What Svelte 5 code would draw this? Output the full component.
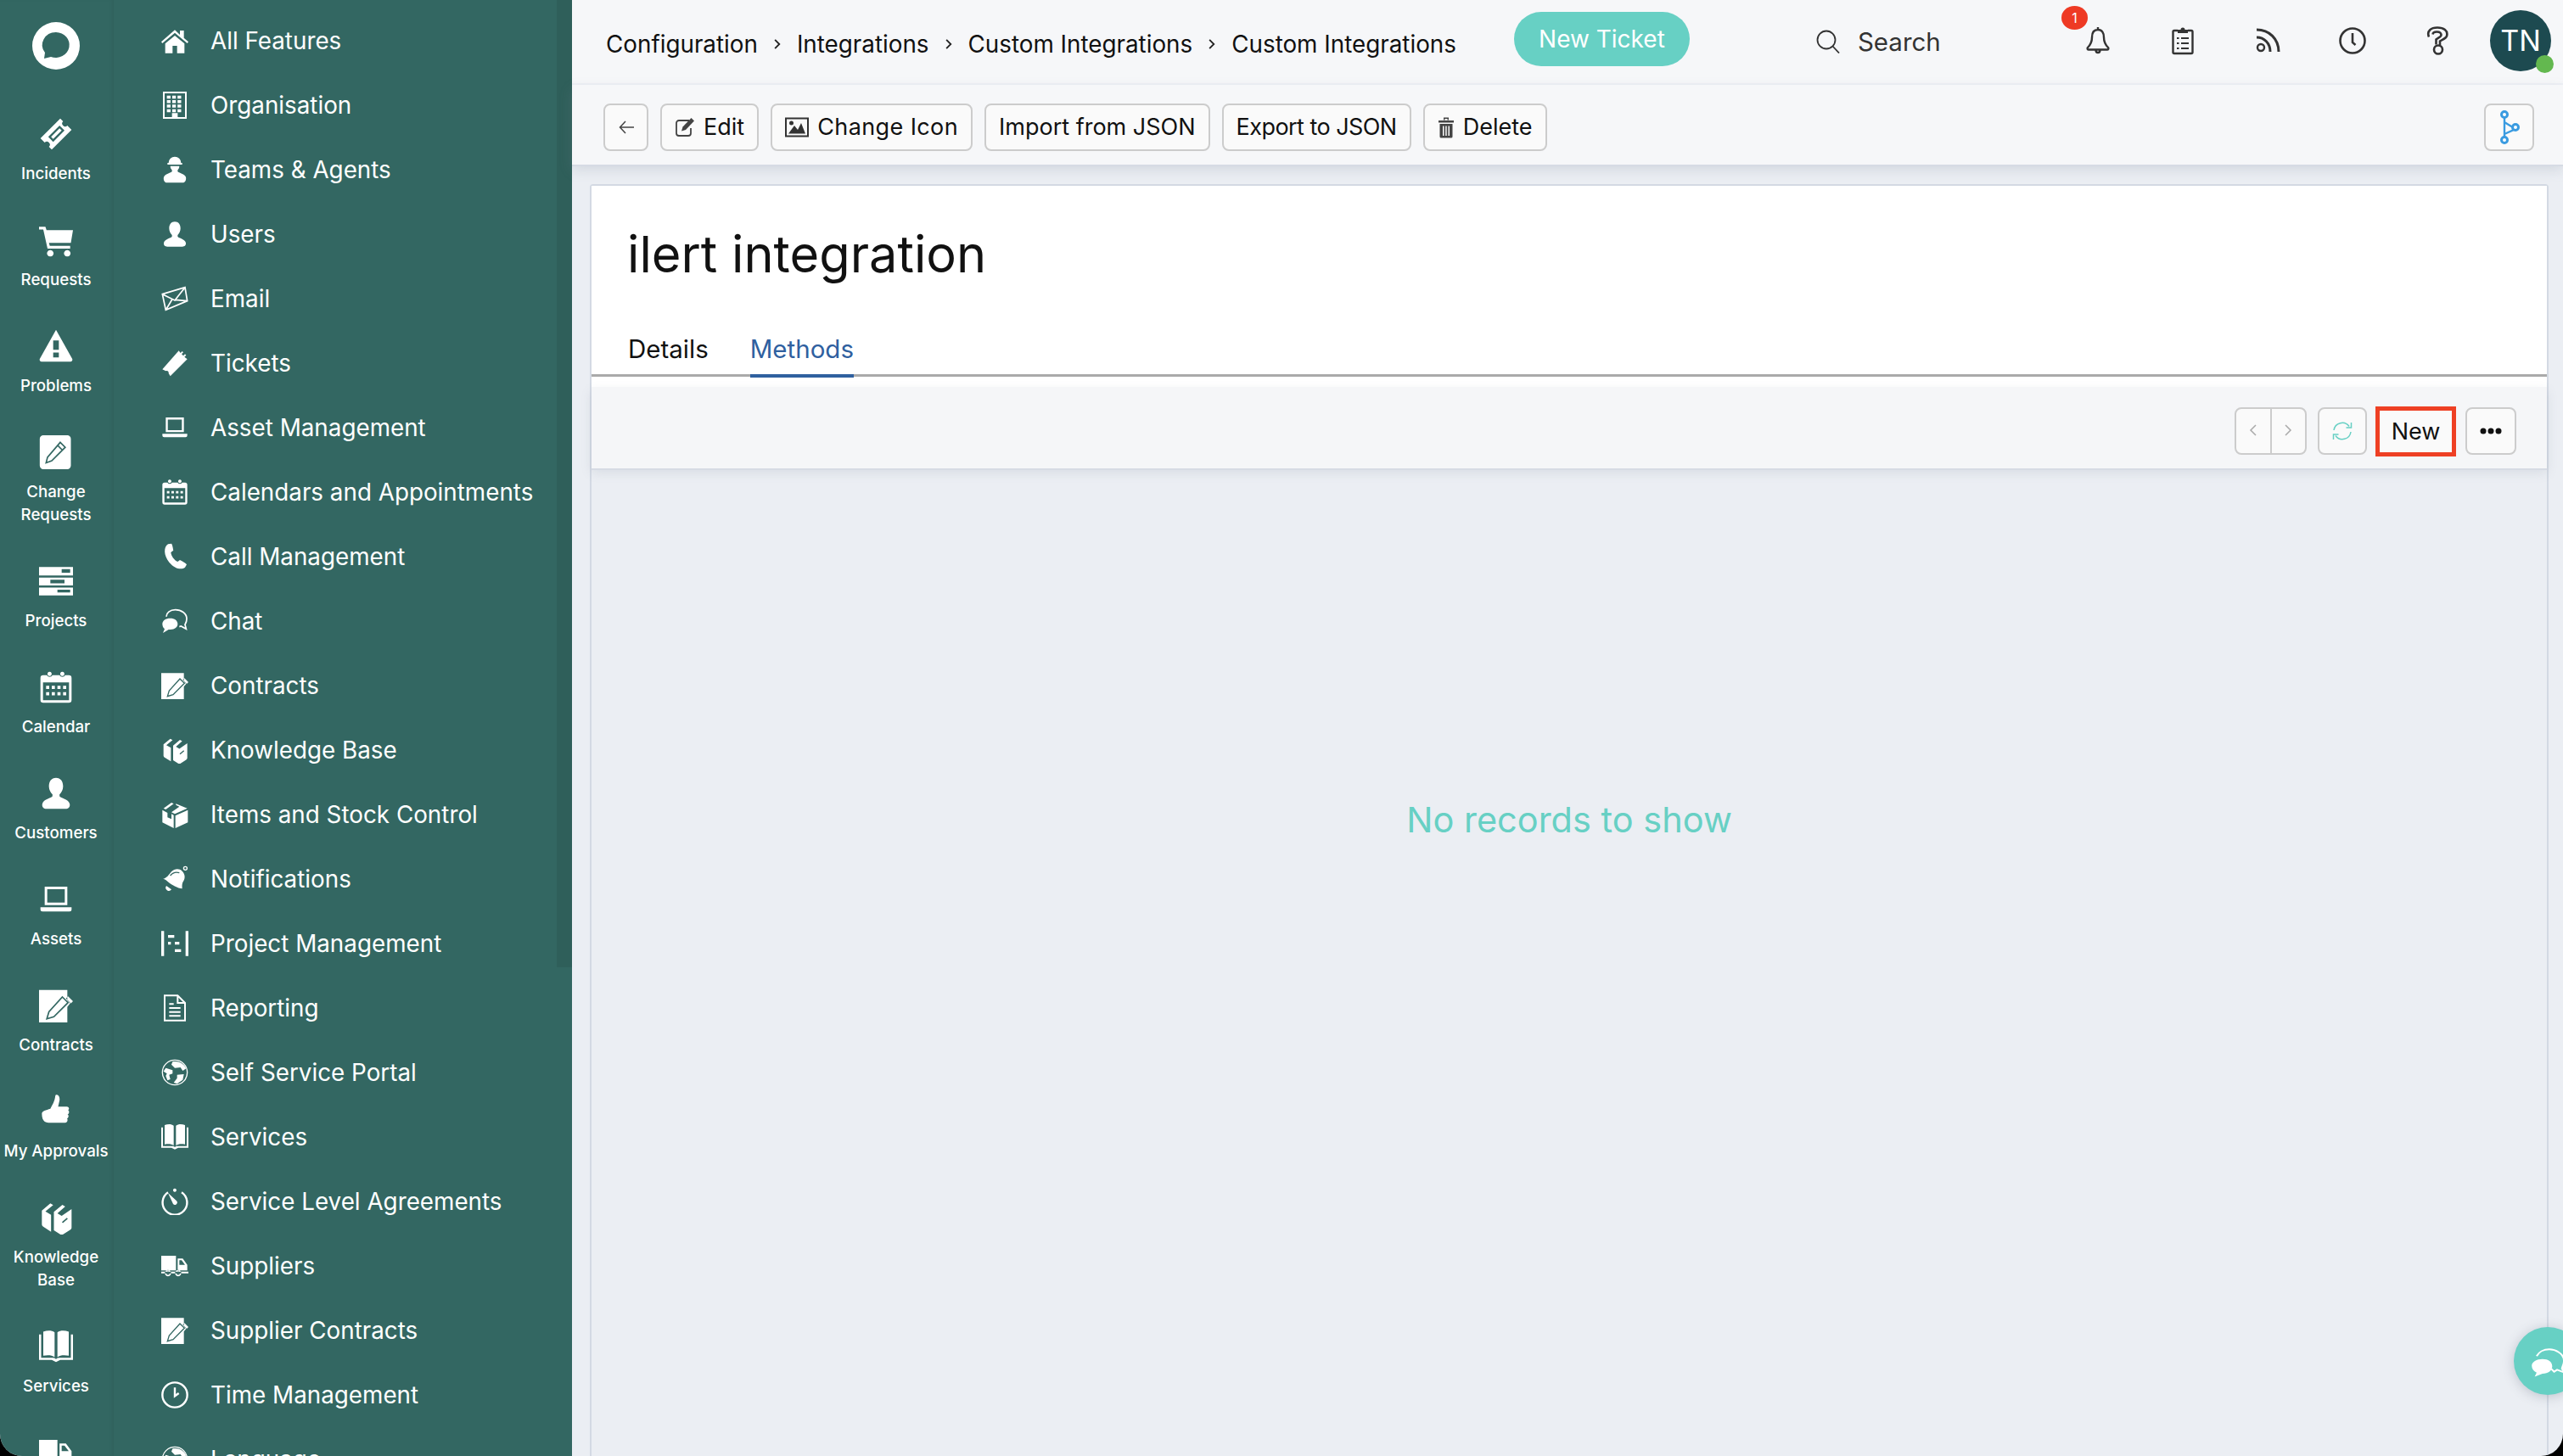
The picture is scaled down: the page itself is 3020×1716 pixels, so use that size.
<script>
	const cells = (xs, ys, w, h) =>
		ys.flatMap((y) => xs.map((x) => `M${x} ${y}h${w}v${h}h-${w}z`)).join('');

	const pencilPage = {
		f: 'M0 1h20v7.500l2 2L20 13v11H0zM20.500 5.500 24 9l-1.500 1.500L19 7z',
		k: 'M16.500 6 20.500 10 10.500 20 5.500 21.500 7 16.500z'
	};
	const globe = {
		s: 'M23 12a11 11 0 1 1-22 0 11 11 0 1 1 22 0',
		f: 'M10 2.500c5-1 10 1.500 12 6l-3 2-2-3-5 .5-3-3zM4 8l6 2v3l-3 1 1 4-2.500 1L4 15l1-2-3-2zM14 14l6-.5-1 5-5 3.500-3-1 3-4z',
		w: 1
	};
	const user = {
		f: 'M12 1c3.300 0 5 2.500 5 6 0 2.500-1.200 4.500-2.500 5.700V14c0 1.300 6.500 2 7.200 5.500.4 2.300-1 3.500-3 3.500H5.300c-2 0-3.400-1.200-3-3.500C3 16 9.500 15.300 9.500 14v-1.300C8.200 11.500 7 9.500 7 7c0-3.500 1.700-6 5-6z'
	};
	const laptop = {
		f: 'M4 3h16v13H4zM5.800 4.800v9.400h12.400V4.800zM1 17.500h22V19a1.500 1.500 0 0 1-1.500 1.500h-19A1.500 1.500 0 0 1 1 19z'
	};
	const calendar = {
		f:
			'M3 3.500h2.500a2.300 2.300 0 0 0 4 0h5a2.300 2.300 0 0 0 4 0H21a2 2 0 0 1 2 2V21a2 2 0 0 1-2 2H3a2 2 0 0 1-2-2V5.500a2 2 0 0 1 2-2zM2.800 8.500v12.700h18.400V8.500zM7.500 1a1.500 1.500 0 1 1-.1 0zM16.500 1a1.500 1.500 0 1 1-.1 0z' +
			cells([5, 9, 13, 17], [11, 15.500], 2.200, 2.200)
	};
	const books = {
		f: 'M2 7 8 2l2 1.200L4.500 7.700l4 2.300V22L3 18.500a2 2 0 0 1-1-1.500zM10.500 8 16.500 3l2 1.200L13 9l3 1.800L23 6v13c0 .8-.5 1.300-1 1.700L16 24.500 10.500 21z',
		k: 'M16.500 15.500 20 12.500'
	};
	const book = {
		f: 'M3 1.500c3-1 6-1 8 .5v17.500c-2-1.500-5-1.500-8-1zM21 1.500c-3-1-6-1-8 .5v17.500c2-1.500 5-1.500 8-1zM0 3.500h1.500v16.500H10c1 0 1.500.5 2 1 .5-.5 1-1 2-1h8.500V3.500H24v18h-9l-3 1.500-3-1.500H0z'
	};
	const truck = {
		f: 'M0 3h13v13H0zM14.500 5.500H19l4 5.500v5h-8.500zM16 7v4h5l-3-4zM0 17h4.500a2.500 2.500 0 0 0 3 0h6a2.500 2.500 0 0 0 3 0H24v1.500h-3.500H0zM6 15.500a2.800 2.800 0 1 1-.1 0zM15 15.500a2.800 2.800 0 1 1-.1 0z',
		k: 'M7 18.300a1 1 0 1 1-2 0 1 1 0 1 1 2 0M16 18.300a1 1 0 1 1-2 0 1 1 0 1 1 2 0'
	};

	const icons = {
		home: { f: 'M12 2.500 0 13l1 1.300L12 5l11 9.300 1-1.300-4-3.400V3h-3.500v3.700zM3.500 14.500V23H10v-6.500h4V23h6.500v-8.500L12 7.500z' },
		building: {
			f: 'M1.500 0h21v24h-21zM3 1.500v21h6.500V19h5v3.500H21v-21z' + cells([5, 9.700, 14.400], [3.500, 7.500, 11.500, 15.500], 3.200, 2.600)
		},
		engineer: {
			f: 'M6.500 6a5.500 5.500 0 0 1 11 0h1v1.500h-13V6zM8 8.800h8a4 4 0 0 1-1.500 3.500v1.200c0 1 5.500 2 7 4.500 1 2 0 5-2 5.500H4.500c-2-.5-3-3.500-2-5.500 1.500-2.500 7-3.500 7-4.500v-1.200A4 4 0 0 1 8 8.800z'
		},
		user,
		email: {
			s: 'M1 8 21 2l2 12L4 22zM1 8l11 5.500L21 2M4 22l6-10M23 14l-10.500-1',
			w: 1.300
		},
		ticket: {
			f: 'M1 17.500 15.500 1 17 3 18.500 1.500l1 1L18 4l1.500 1.500L21 4l1 1-1.500 1.500L23 8.500 8 23.500 6.500 21c.5-1-1-3-2.500-2z'
		},
		laptop,
		calendar,
		phone: {
			f: 'M6 1 9 .5c.5 0 1.500 4 1.700 6L8.500 8.200c.2 3 3 7 6 8.300l2-1.500c1.500.8 5.500 3 6 4L21 21.500C18 24 12 23 7 17S2 3.500 6 1z'
		},
		chat: {
			f: 'M8 9.500c3.800 0 6.500 2 6.500 5S12 19.500 8 19.500H6.500l-5 3 1.500-3.500C1.500 18 1 16 1 14.500 1 11.500 4 9.500 8 9.500z',
			s: 'M4.500 8c0-3 3-6 8-6S22.500 5 22.500 10c0 3-1 4-1.500 5l1 4-4.500-2.500-1.500.5',
			w: 1.300
		},
		contract: pencilPage,
		books,
		box: {
			f: 'M1 8 5.500 10.500V14.500L9 16V11.500L11 12.500V24L1 19zM12.500 13 23.500 8v11l-11 5zM2 6.500 9 1.500l2 1-7 5zM13 2.500l10 4-11 5-3-1.500 7-5-3-1.500z'
		},
		bell: {
			f: 'M9 5.500c3-3 7-3 9.500-.5s3 6 1 9c-1.500 2-1 5-1 6.500-4-.5-9-3-13-6.500-2-1.700-3-2-4-2 2-.5 4-2 5-3.500C8 7 8 6.500 9 5.500zM4.500 18l4.500 3.200a2.700 2.700 0 0 1-4.500-3.200z',
			s: 'M22.800 2.500a1.500 1.500 0 1 1-3 0 1.500 1.500 0 1 1 3 0',
			k: 'M8 9c2-2.500 5-3.500 8-2.500',
			w: 1
		},
		gantt: { f: 'M0 1h2.500v22H0zM21.500 1H24v22h-2.500zM6 4.500h5.500V7H6zM6 10.500h2.500V13H6zM12 10.500h4V13h-4zM12 17h5.500v2.500H12z' },
		report: {
			s: 'M3 1h11.500L21 7.500V23H3zM14.500 1v6.500H21M7 8.500h4M7 12h10M7 15.500h10M7 19h10',
			w: 1.500
		},
		globe,
		book,
		timer: {
			s: 'M6 4a10.800 10.800 0 1 0 12 0',
			f: 'M6 4.500 13.500 11.500a2 2 0 0 1-3 2.800zM12 .5a1.500 1.500 0 1 1-.1 0z',
			w: 1.800
		},
		truck,
		clock: { s: 'M23 12a11 11 0 1 1-22 0 11 11 0 1 1 22 0M12 5.500v7.500l3.500-2.500', w: 1.800 },
		incident: {
			f: 'M15 1 17 3a2 2 0 0 0 3 3l3 3L9 23l-2-2a2 2 0 0 0-3-3l-3-3zM14.500 6 6.500 14 10 17.500 18 9.500zM14.500 8 8.500 14 10 15.500 16 9.500z'
		},
		cart: { f: 'M0 2.500h4.500l.8 2.500H24l-1.500 9H7l.6 2H22v2H6L3 4.500H0zM8 19a2.300 2.300 0 1 1-.1 0zM20 19a2.300 2.300 0 1 1-.1 0z' },
		warning: { f: 'M12 .5 23.500 21a1.500 1.500 0 0 1-1.300 2H1.800A1.500 1.500 0 0 1 .5 21zM10 8v6.500h4V8zM10 16.500V20h4v-3.500z' },
		change: {
			f: 'M3 0h17a2.500 2.500 0 0 1 2.500 2.500v19A2.500 2.500 0 0 1 20 24H3a2.500 2.500 0 0 1-2.500-2.500v-19A2.500 2.500 0 0 1 3 0z',
			k: 'M15 5 18.500 8.500 9 18 5 19.500 6 15.500zM13 7 16.500 10.500'
		},
		projects: { f: 'M0 2h24v6H0zM16 3.500V6h6V3.500zM0 9.500h24V15H0zM8 11v2.500h10V11zM0 16.500h24V22H0zM13 18v2h9v-2z' },
		thumb: {
			f: 'M8 10c1.500-3 3-5 3.500-9 .2-1.500 3.500-1 3 3l-1 4.500h6c2 0 2 2 1 2.500 1 .5 1 2.500-.3 3 1 .8.8 2.500-.4 3 .8 1 .2 3-1.500 3H8c-3 0-6-.5-6-6.500C2 11.500 5 11 8 10z'
		}
	};

	const rail = [
		['Incidents', 'incident'],
		['Requests', 'cart'],
		['Problems', 'warning'],
		['Change Requests', 'change'],
		['Projects', 'projects'],
		['Calendar', 'calendar'],
		['Customers', 'user'],
		['Assets', 'laptop'],
		['Contracts', 'contract'],
		['My Approvals', 'thumb'],
		['Knowledge Base', 'books'],
		['Services', 'book'],
		['Suppliers', 'truck']
	];

	const menu = [
		['All Features', 'home'],
		['Organisation', 'building'],
		['Teams & Agents', 'engineer'],
		['Users', 'user'],
		['Email', 'email'],
		['Tickets', 'ticket'],
		['Asset Management', 'laptop'],
		['Calendars and Appointments', 'calendar'],
		['Call Management', 'phone'],
		['Chat', 'chat'],
		['Contracts', 'contract'],
		['Knowledge Base', 'books'],
		['Items and Stock Control', 'box'],
		['Notifications', 'bell'],
		['Project Management', 'gantt'],
		['Reporting', 'report'],
		['Self Service Portal', 'globe'],
		['Services', 'book'],
		['Service Level Agreements', 'timer'],
		['Suppliers', 'truck'],
		['Supplier Contracts', 'contract'],
		['Time Management', 'clock'],
		['Language', 'globe']
	];

	const crumbs = ['Configuration', 'Integrations', 'Custom Integrations', 'Custom Integrations'];
</script>

{#snippet icon(name)}
	{@const i = icons[name]}
	<svg viewBox="0 0 24 24" class="ic">
		{#if i.f}<path d={i.f} fill="currentColor" fill-rule="evenodd" />{/if}
		{#if i.s}<path d={i.s} fill="none" stroke="currentColor" stroke-width={i.w} />{/if}
		{#if i.k}<path d={i.k} fill="none" stroke="#336762" stroke-width="1" />{/if}
	</svg>
{/snippet}

<div class="app">
	<nav class="rail">
		<div class="logo">
			<svg viewBox="0 0 56 56">
				<path
					d="M28 0a28 28 0 1 1 0 56 28 28 0 1 1 0-56zM28 12a16 15 0 0 0-13 24l-1 7 8-2a16 15 0 1 0 6-29z"
					fill="#fff"
					fill-rule="evenodd"
				/>
			</svg>
		</div>
		{#each rail as [label, name]}
			<a class="rail-item">
				{@render icon(name)}
				<span>{label}</span>
			</a>
		{/each}
	</nav>

	<nav class="menu">
		<ul>
			{#each menu as [label, name]}
				<li>{@render icon(name)}<span>{label}</span></li>
			{/each}
		</ul>
		<div class="scrollbar"></div>
	</nav>

	<main>
		<header>
			<ol class="crumbs">
				{#each crumbs as c, n}
					{#if n > 0}
						<li class="sep">
							<svg viewBox="0 0 10 14"><path d="M2.500 2.500 7 7l-4.500 4.500" fill="none" stroke="#222" stroke-width="1.600" /></svg>
						</li>
					{/if}
					<li>{c}</li>
				{/each}
			</ol>
			<button class="new-ticket">New Ticket</button>
			<div class="search">
				<svg viewBox="0 0 28 28" width="28" height="28">
					<circle cx="12" cy="12" r="10.500" fill="none" stroke="#333" stroke-width="1.800" />
					<path d="M19.500 19.500 27 27.500" stroke="#333" stroke-width="1.800" />
				</svg>
				<span>Search</span>
			</div>
			<div class="tools">
				<div class="tool">
					<span class="badge">1</span>
					<svg viewBox="0 0 30 34" width="30" height="34">
						<path d="M15 4c-5 0-7 4-7 9 0 6-2 9-5 12 -1 1.500 0 2.500 1 2.500h22c1 0 2-1 1-2.500-3-3-5-6-5-12 0-5-2-9-7-9zM15 1v3M12.500 28a2.500 3 0 0 0 5 0" fill="none" stroke="#333" stroke-width="2.400" />
					</svg>
				</div>
				<div class="tool">
					<svg viewBox="0 0 26 34" width="26" height="34">
						<path d="M7 5H3a1.500 1.500 0 0 0-1.500 1.500v24A1.500 1.500 0 0 0 3 32h20a1.500 1.500 0 0 0 1.500-1.500v-24A1.500 1.500 0 0 0 23 5h-4" fill="none" stroke="#333" stroke-width="2.400" />
						<path d="M7 8V4h3.500a2.500 2.500 0 0 1 5 0H19v4z" fill="#333" />
						<path d="M6 14h2.500M11 14h9M6 20h2.500M11 20h9M6 26h2.500M11 26h9" stroke="#333" stroke-width="2" />
					</svg>
				</div>
				<div class="tool">
					<svg viewBox="0 0 30 30" width="30" height="30">
						<circle cx="7" cy="23" r="4" fill="none" stroke="#333" stroke-width="2.400" />
						<path d="M2 11c9 0 16 7 16 17M2 2c15 0 26 11 26 26" fill="none" stroke="#333" stroke-width="3" />
					</svg>
				</div>
				<div class="tool">
					<svg viewBox="0 0 32 32" width="32" height="32">
						<circle cx="16" cy="16" r="14.500" fill="none" stroke="#333" stroke-width="2.600" />
						<path d="M16 7v11l3.500 3" fill="none" stroke="#333" stroke-width="2.600" />
					</svg>
				</div>
				<div class="tool">
					<svg viewBox="0 0 26 34" width="26" height="34">
						<path d="M3 12.500C0 5 6 1.500 13 1.500s13 3.500 11 10c-1 3-6 4.500-8 6v5" fill="none" stroke="#333" stroke-width="2.600" />
						<path d="M7.500 9.500c.5-4 9.500-4 10 .5.300 2.500-4 3.500-6 5.500v6" fill="none" stroke="#333" stroke-width="2.600" />
						<circle cx="14" cy="27.500" r="5" fill="#f6f7f9" stroke="#333" stroke-width="2.600" />
					</svg>
				</div>
				<div class="avatar">TN<span class="online"></span></div>
			</div>
		</header>

		<div class="toolbar">
			<button class="btn back" aria-label="Back">
				<svg viewBox="0 0 20 20" width="20" height="20"><path d="M9 3 2.500 10 9 17M2.500 10H19" fill="none" stroke="#444" stroke-width="1.500" /></svg>
			</button>
			<button class="btn">
				<svg viewBox="0 0 24 24" width="24" height="24">
					<path d="M17 4H5a3 3 0 0 0-3 3v12a3 3 0 0 0 3 3h11a3 3 0 0 0 3-3v-6" fill="none" stroke="#444" stroke-width="1.800" />
					<path d="M19.500 1 23 4.500 13 15l-5 1.500 1.500-5z" fill="#444" />
				</svg>
				Edit
			</button>
			<button class="btn wide">
				<svg viewBox="0 0 28 24" width="28" height="24">
					<rect x="1" y="1.500" width="26" height="21" fill="none" stroke="#333" stroke-width="2" />
					<path d="M4 19.500 11 10l4 5 4-8 5 12.500z" fill="#333" />
					<circle cx="7.500" cy="7" r="2.500" fill="#333" />
				</svg>
				Change Icon
			</button>
			<button class="btn">Import from JSON</button>
			<button class="btn tight">Export to JSON</button>
			<button class="btn">
				<svg viewBox="0 0 20 26" width="20" height="26">
					<path d="M1 5h18v2.500H1zM7 4.500V1.500h6v3h-1.500V3h-3v1.500zM2.500 9h15v15a1.500 1.500 0 0 1-1.500 1.500H4A1.500 1.500 0 0 1 2.500 24zM6 11.500v11.500h1.500V11.500zM9.200 11.500v11.500h1.500V11.500zM12.500 11.500v11.500H14V11.500z" fill="#444" fill-rule="evenodd" />
				</svg>
				Delete
			</button>
			<button class="btn branch" aria-label="Workflow">
				<svg viewBox="0 0 24 40" width="24" height="40">
					<path d="M6 6v28M6 14l13 8-13 6" fill="none" stroke="#3a9be0" stroke-width="2.400" />
					<g fill="#fff" stroke="#3a9be0" stroke-width="3">
						<circle cx="6" cy="5" r="3.500" />
						<circle cx="6" cy="35" r="3.500" />
						<circle cx="19" cy="20" r="3.500" />
					</g>
				</svg>
			</button>
		</div>

		<section class="card">
			<div class="head">
				<h1>ilert integration</h1>
				<div class="tabs">
					<span class="tab">Details</span>
					<span class="tab active">Methods</span>
				</div>
			</div>
			<div class="grid-bar">
				<div class="pager">
					<button aria-label="Previous"><svg viewBox="0 0 12 16" width="12" height="16"><path d="M9 2 3 8l6 6" fill="none" stroke="#aaa" stroke-width="1.500" /></svg></button>
					<button aria-label="Next"><svg viewBox="0 0 12 16" width="12" height="16"><path d="M3 2l6 6-6 6" fill="none" stroke="#aaa" stroke-width="1.500" /></svg></button>
				</div>
				<button class="btn refresh" aria-label="Refresh">
					<svg viewBox="0 0 24 24" width="24" height="24">
						<path d="M2 11A10 10 0 0 1 20 6.500M22 13A10 10 0 0 1 4 17.500" fill="none" stroke="#67d0c4" stroke-width="1.500" />
						<path d="M22.500 2v6h-6M1.500 22v-6h6" fill="none" stroke="#67d0c4" stroke-width="1.500" />
					</svg>
				</button>
				<button class="btn new">New</button>
				<button class="btn more" aria-label="More">
					<svg viewBox="0 0 26 8" width="26" height="8"><g fill="#111"><circle cx="4" cy="4" r="3.500" /><circle cx="13" cy="4" r="3.500" /><circle cx="22" cy="4" r="3.500" /></g></svg>
				</button>
			</div>
			<div class="empty">No records to show</div>
		</section>

		<button class="chat-fab" aria-label="Chat">
			<svg viewBox="0 0 40 34" width="46" height="39">
				<path d="M12 12c6 0 10 3 10 7.500S18 27 12 27l-8 3 2-4c-3-1.500-5-4-5-7 0-4 5-7 11-7z" fill="#fff" />
				<path d="M6 9c2-4 7-7 13-7s15 4 15 12c0 4-2 6-2 8l3 4-8-3-3 2-3-3" fill="none" stroke="#fff" stroke-width="1.800" />
			</svg>
		</button>
	</main>
</div>

<style>
	:global(body) {
		background: #000;
	}
	.app {
		display: flex;
		width: 3020px;
		height: 1716px;
		overflow: hidden;
		border-radius: 0 0 26px 26px;
		font-family: Inter, 'Liberation Sans', sans-serif;
		color: #111;
		background: #ebeef3;
	}
	.rail {
		flex: none;
		box-sizing: border-box;
		width: 134px;
		height: 100%;
		padding-right: 2px;
		overflow: hidden;
		background: #336762;
		box-shadow: inset -3px 0 4px -2px rgba(0, 0, 0, 0.08);
		color: #fff;
	}
	.logo {
		height: 118px;
		padding: 26px 38px 0;
		box-sizing: border-box;
	}
	.logo svg {
		display: block;
		width: 56px;
		height: 56px;
	}
	.rail-item {
		display: flex;
		flex-direction: column;
		align-items: center;
		padding: 20px 0 25px;
		font-size: 18.7px;
		font-weight: 500;
		line-height: 27px;
		text-align: center;
	}
	.rail-item .ic {
		width: 40px;
		height: 40px;
		margin-bottom: 13px;
	}
	.rail-item span {
		width: 128px;
	}
	.menu {
		position: relative;
		flex: none;
		width: 540px;
		height: 100%;
		overflow: hidden;
		background: #336762;
		color: #fff;
	}
	.menu ul {
		margin: 0;
		padding: 10px 0 0 56px;
		list-style: none;
	}
	.menu li {
		display: flex;
		align-items: center;
		gap: 26px;
		height: 76px;
		font-size: 27.8px;
		white-space: nowrap;
	}
	.menu .ic {
		flex: none;
		width: 32px;
		height: 32px;
	}
	.scrollbar {
		position: absolute;
		top: 0;
		right: 0;
		width: 18px;
		height: 1140px;
		background: #2f5f5a;
	}
	main {
		position: relative;
		display: flex;
		flex: 1;
		flex-direction: column;
		min-width: 0;
		height: 100%;
	}
	header {
		display: flex;
		flex: none;
		align-items: center;
		height: 98px;
		padding-left: 40px;
		border-bottom: 2px solid #eef0f5;
		background: #f6f7f9;
		box-sizing: content-box;
	}
	.crumbs {
		display: flex;
		align-items: center;
		margin: 0;
		padding: 6px 0 0;
		list-style: none;
		font-size: 27.8px;
		white-space: nowrap;
	}
	.sep {
		display: flex;
		justify-content: center;
		width: 46px;
	}
	.sep svg {
		width: 12px;
		height: 16px;
	}
	.new-ticket {
		width: 207px;
		height: 64px;
		margin-left: 68px;
		margin-top: -6px;
		border: 0;
		border-radius: 32px;
		background: #67d0c4;
		color: #fff;
		font: 400 28px Inter, sans-serif;
	}
	.search {
		display: flex;
		align-items: center;
		gap: 21px;
		margin-left: 149px;
		font-size: 29.5px;
		color: #333;
	}
	.tools {
		display: flex;
		align-items: center;
		margin-left: auto;
	}
	.tool {
		position: relative;
		display: flex;
		align-items: center;
		justify-content: center;
		width: 100px;
		height: 34px;
		margin-top: -2px;
	}
	.badge {
		position: absolute;
		top: -24px;
		left: 7px;
		width: 31px;
		height: 28px;
		border-radius: 50%;
		background: #ee3a24;
		color: #fff;
		font-size: 16px;
		line-height: 28px;
		text-align: center;
	}
	.avatar {
		position: relative;
		width: 72px;
		height: 72px;
		margin: -2px 14px 0 12px;
		border-radius: 50%;
		background: #1d4a50;
		color: #fff;
		font-size: 34px;
		line-height: 72px;
		text-align: center;
	}
	.online {
		position: absolute;
		right: -3px;
		bottom: -2px;
		width: 21px;
		height: 21px;
		border-radius: 50%;
		background: #63b84f;
	}
	.toolbar {
		position: relative;
		z-index: 1;
		display: flex;
		flex: none;
		align-items: center;
		gap: 14px;
		box-sizing: border-box;
		height: 94px;
		padding: 5px 34px 0 37px;
		background: #f6f7f9;
		box-shadow: 0 2px 0 #d6dbe4, 0 6px 14px rgba(120, 130, 150, 0.22);
	}
	.btn {
		display: flex;
		align-items: center;
		justify-content: center;
		gap: 10px;
		box-sizing: border-box;
		height: 56px;
		padding: 0 15px;
		border: 2px solid #ccc;
		border-radius: 8px;
		background: #fafafa;
		color: #111;
		font: 400 27px Inter, sans-serif;
		white-space: nowrap;
	}
	.wide {
		letter-spacing: 0.4px;
	}
	.tight {
		letter-spacing: -0.55px;
	}
	.back {
		width: 53px;
		padding: 0;
	}
	.branch {
		width: 59px;
		margin-left: auto;
		padding: 0;
	}
	.card {
		display: flex;
		flex: 1;
		flex-direction: column;
		margin: 23px 17px 0 21px;
		border: solid #d3d9e3;
		border-width: 2px 2px 0;
		border-radius: 4px 4px 0 0;
	}
	.head {
		flex: none;
		height: 237px;
		padding: 0 0 0 42px;
		background: #fff;
		position: relative;
	}
	h1 {
		margin: 0;
		padding-top: 41px;
		font-size: 59.5px;
		font-weight: 400;
		line-height: 78px;
	}
	.tabs {
		position: absolute;
		right: 0;
		bottom: 12px;
		left: 0;
		display: flex;
		gap: 49px;
		height: 64px;
		padding-left: 43px;
		border-bottom: 3px solid #aaa;
	}
	.tab {
		font-size: 29.5px;
		line-height: 68px;
	}
	.active {
		height: 64px;
		border-bottom: 4px solid #2f609f;
		color: #2f609f;
	}
	.grid-bar {
		position: relative;
		display: flex;
		flex: none;
		align-items: center;
		justify-content: flex-end;
		box-sizing: border-box;
		height: 96px;
		padding: 8px 36px 0 0;
		background: #f5f6f8;
		box-shadow: 0 2px 0 #d6dbe4, 0 5px 12px rgba(120, 130, 150, 0.16);
	}
	.pager {
		display: flex;
		box-sizing: border-box;
		width: 85px;
		height: 56px;
		border: 2px solid #ccc;
		border-radius: 8px;
		background: #fafafa;
	}
	.pager button {
		flex: 1;
		padding: 0;
		border: 0;
		background: none;
	}
	.pager button + button {
		border-left: 2px solid #ccc;
	}
	.refresh {
		width: 58px;
		margin: 0 10px 0 13px;
		padding: 0;
	}
	.new {
		width: 95px;
		height: 59px;
		padding: 0;
		border: 5px solid #ee4024;
		border-radius: 0;
		margin-right: 11px;
	}
	.more {
		width: 60px;
		padding: 0;
	}
	.empty {
		flex: 1;
		padding-top: 386px;
		color: #67d0c4;
		font-size: 41.5px;
		line-height: 56px;
		text-align: center;
	}
	.chat-fab {
		position: absolute;
		top: 1564px;
		left: 2288px;
		display: flex;
		align-items: center;
		width: 80px;
		height: 80px;
		padding: 6px 0 0 20px;
		border: 0;
		border-radius: 50%;
		background: #67d0c4;
		box-shadow: 0 2px 14px rgba(90, 100, 120, 0.3);
	}
</style>
